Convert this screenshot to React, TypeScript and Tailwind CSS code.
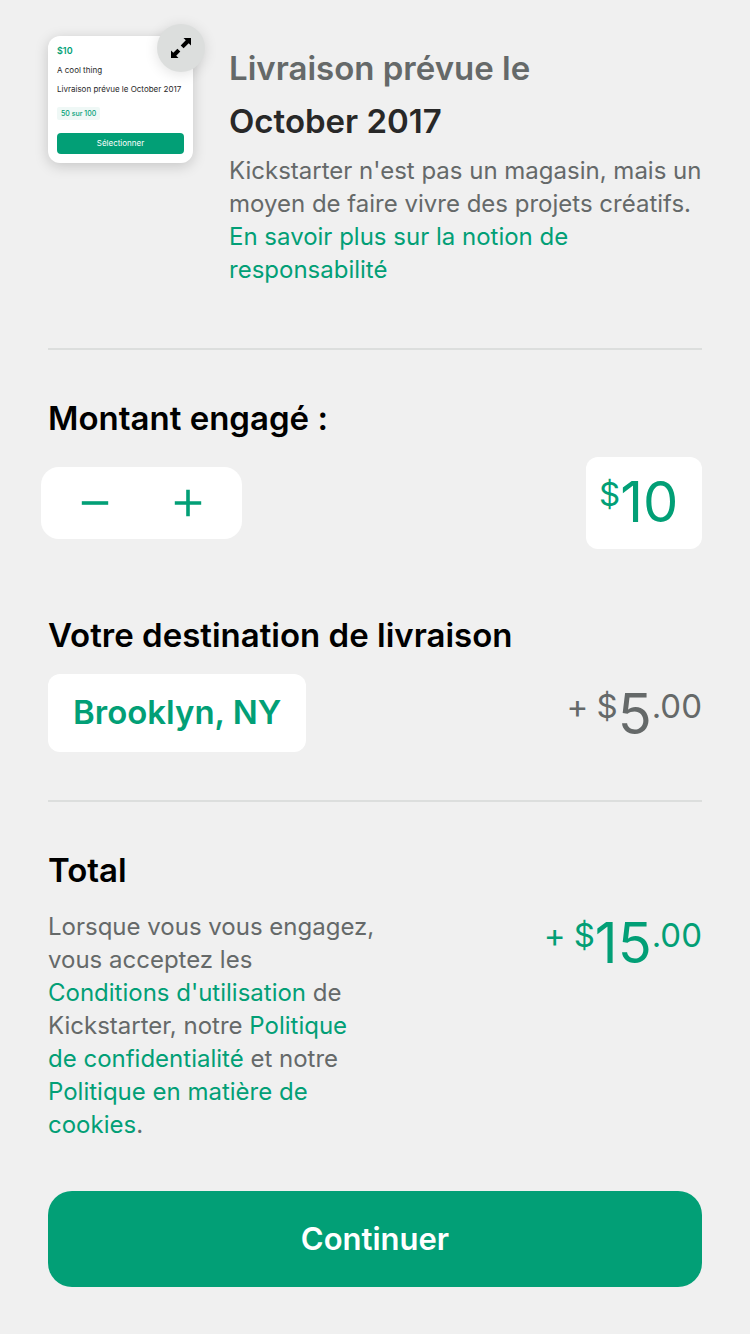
import { useState } from "react";

function Heading({ children }: { children: React.ReactNode }) {
  return <h2 className="text-[33px] leading-[44px] font-semibold text-black">{children}</h2>;
}

function Amount({ whole, className }: { whole: string; className: string }) {
  return (
    <p className={"flex shrink-0 items-start text-[33px] leading-[24px] " + className}>
      <span className="mr-2">+</span>
      <span>$</span>
      <span className="text-[56px] leading-[40px]">{whole}</span>
      <span>.00</span>
    </p>
  );
}

function RewardCard() {
  return (
    <div className="relative w-[145px] shrink-0">
      <div className="flex h-[127px] flex-col items-start rounded-xl bg-white px-[9px] pt-[9px] pb-[9px] text-[8px] leading-[12px] whitespace-nowrap text-[#282828] shadow-[0_3px_14px_rgba(0,0,0,0.18)]">
        <p className="text-[9px] font-semibold text-[#029f76]">$10</p>
        <p className="mt-[7px]">A cool thing</p>
        <p className="mt-[7px]">Livraison prévue le October 2017</p>
        <p className="mt-3 rounded-xs bg-[#eff8f6] px-1 text-[7px] leading-[13px] font-medium text-[#029f76]">50 sur 100</p>
        <p className="mt-auto w-full rounded bg-[#029f76] text-center leading-[21px] text-white">Sélectionner</p>
      </div>
      <button
        aria-label="Agrandir"
        className="absolute -top-3 -right-3 flex size-12 items-center justify-center rounded-full bg-[#dcdedd] shadow-[0_2px_14px_rgba(0,0,0,0.12)]"
      >
        <svg viewBox="0 0 20 20" className="size-5" fill="black" aria-hidden="true">
          <path d="M12.5 0H20v7.5l-2.3-2.3-5.1 5.1-2.9-2.9 5.1-5.1z" />
          <path d="M7.5 20H0v-7.5l2.3 2.3 4.1-4.1 2.9 2.9-4.1 4.1z" />
        </svg>
      </button>
    </div>
  );
}

export default function App() {
  const [pledge, setPledge] = useState(10);
  return (
    <main className="flex min-h-screen flex-col bg-[#f0f0f0] px-12 pt-9 pb-12 font-['Inter','Liberation_Sans',sans-serif] text-[#656969]">
      <section className="flex gap-9">
        <RewardCard />
        <div className="min-w-0 flex-1 pt-[6px]">
          <h1 className="text-[33px] leading-[53px] font-semibold">
            Livraison prévue le
            <span className="block text-[#282828]">October 2017</span>
          </h1>
          <p className="mt-[6px] text-[24px] leading-[33px]">
            Kickstarter n'est pas un magasin, mais un moyen de faire vivre des projets créatifs.{" "}
            <a href="#responsabilite" className="text-[#029f76]">En savoir plus sur la notion de responsabilité</a>
          </p>
        </div>
      </section>

      <hr className="mt-[62px] border-t-2 border-[#dcdedd]" />

      <section className="mt-[46px]">
        <Heading><label htmlFor="pledge">Montant engagé :</label></Heading>
        <div className="mt-[17px] flex items-center justify-between">
          <div className="-ml-[7px] flex h-[72px] w-[201px] items-center rounded-[18px] bg-white px-2 text-[#029f76]">
            <button aria-label="Diminuer" className="flex h-full flex-1 items-center justify-center" onClick={() => setPledge(Math.max(1, pledge - 1))}>
              <svg viewBox="0 0 28 28" className="size-7" fill="currentColor" aria-hidden="true">
                <path d="M.8 12.2h26.4v3.6H.8z" />
              </svg>
            </button>
            <button aria-label="Augmenter" className="flex h-full flex-1 items-center justify-center" onClick={() => setPledge(pledge + 1)}>
              <svg viewBox="0 0 28 28" className="size-7" fill="currentColor" aria-hidden="true">
                <path d="M.8 12.2h11.4V.8h3.6v11.4h11.4v3.6H15.8v11.4h-3.6V15.8H.8z" />
              </svg>
            </button>
          </div>
          <div className="flex h-[92px] w-[116px] items-start rounded-xl bg-white pt-[9px] pr-1 pl-[13px] text-[#029f76]">
            <span className="mt-4 text-[33px] leading-[24px]">$</span>
            <input
              id="pledge"
              inputMode="numeric"
              className="h-[72px] min-w-0 flex-1 bg-transparent text-[56px] leading-[72px] outline-none"
              value={pledge}
              onChange={(e) => setPledge(Number(e.target.value) || 0)}
            />
          </div>
        </div>
      </section>

      <section className="mt-16">
        <Heading>Votre destination de livraison</Heading>
        <div className="mt-[17px] flex items-start justify-between">
          <button className="h-[78px] rounded-xl bg-white px-[25px] text-[33px] font-semibold text-[#029f76]">Brooklyn, NY</button>
          <Amount whole="5" className="pt-5" />
        </div>
      </section>

      <hr className="mt-12 border-t-2 border-[#dcdedd]" />

      <section className="mt-[46px]">
        <Heading>Total</Heading>
        <div className="mt-[18px] flex items-start justify-between">
          <p className="w-1/2 text-[24px] leading-[33px]">
            Lorsque vous vous engagez, vous acceptez les{" "}
            <a href="#conditions" className="text-[#029f76]">Conditions d'utilisation</a> de Kickstarter, notre{" "}
            <a href="#confidentialite" className="text-[#029f76]">Politique de confidentialité</a> et notre{" "}
            <a href="#cookies" className="text-[#029f76]">Politique en matière de cookies</a>.
          </p>
          <Amount whole="15" className="pt-[13px] text-[#029f76]" />
        </div>
      </section>

      <button className="mt-[50px] h-24 w-full rounded-3xl bg-[#029f76] text-[31px] font-semibold text-white">Continuer</button>
    </main>
  );
}
